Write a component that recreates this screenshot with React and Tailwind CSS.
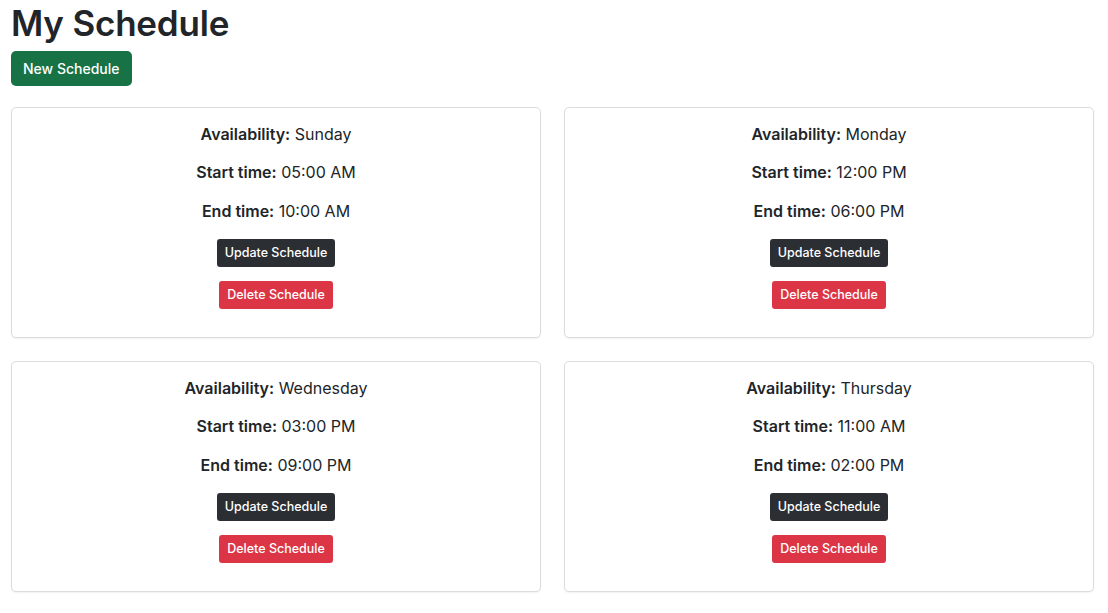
const schedules = [
  { day: 'Sunday', start: '05:00 AM', end: '10:00 AM' },
  { day: 'Monday', start: '12:00 PM', end: '06:00 PM' },
  { day: 'Wednesday', start: '03:00 PM', end: '09:00 PM' },
  { day: 'Thursday', start: '11:00 AM', end: '02:00 PM' },
];

const ScheduleCard = ({ item }) => {
  return (
    <div className="flex flex-col items-center rounded-[5px] border border-[#dcdcdc] bg-white px-4 pt-[14px] pb-[28px] text-[16px] text-[#212529] shadow-[0_1px_2px_rgba(0,0,0,0.06)]">
      <p className="mb-[14px] leading-[24px]">
        <span className="font-semibold">Availability:</span> {item.day}
      </p>
      <p className="mb-[15px] leading-[24px]">
        <span className="font-semibold">Start time:</span> {item.start}
      </p>
      <p className="mb-[16px] leading-[24px]">
        <span className="font-semibold">End time:</span> {item.end}
      </p>
      <button className="h-[28px] rounded-[3px] bg-[#2b2e33] px-[8px] text-[12.5px] font-medium text-white">
        Update Schedule
      </button>
      <button className="mt-[14px] h-[28px] rounded-[3px] bg-[#dc3545] px-[8px] text-[12.5px] font-medium text-white">
        Delete Schedule
      </button>
    </div>
  );
};

export default function App() {
  return (
    <div className="min-h-screen bg-white px-[11px] pt-[1px] font-['Inter',sans-serif] text-[#212529]">
      <h1 className="text-[35px] font-semibold leading-[44px] tracking-[-0.2px]">My Schedule</h1>
      <button className="mt-[6px] h-[35px] rounded-[5px] bg-[#177245] px-[12px] text-[14px] font-medium text-white">
        New Schedule
      </button>
      <div className="mt-[21px] grid grid-cols-[530px_530px] gap-x-[23px] gap-y-[23px]">
        {schedules.map((s) => (
          <ScheduleCard key={s.day} item={s} />
        ))}
      </div>
    </div>
  );
}
